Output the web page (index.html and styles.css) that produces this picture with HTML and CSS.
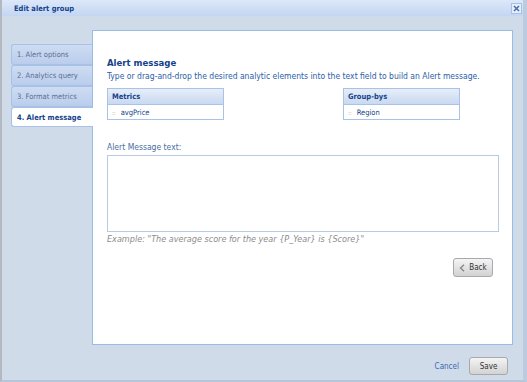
FILE: index.html
```html
<!DOCTYPE html>
<html>
<head>
<meta charset="utf-8">
<link rel="stylesheet" href="styles.css">
</head>
<body>
<div class="window">
  <div class="titlebar">
    <span class="title">Edit alert group</span>
    <span class="close">
      <svg width="9" height="9" viewBox="0 0 9 9"><path d="M2 2 L7 7 M7 2 L2 7" stroke="#4a6fb5" stroke-width="1.6"/></svg>
    </span>
  </div>
  <div class="body">
    <div class="main">
      <div class="tabs">
        <div class="tab">1. Alert options</div>
        <div class="tab">2. Analytics query</div>
        <div class="tab">3. Format metrics</div>
        <div class="tab active">4. Alert message</div>
      </div>
      <div class="panel">
        <h1 class="heading">Alert message</h1>
        <p class="desc">Type or drag-and-drop the desired analytic elements into the text field to build an Alert message.</p>
        <div class="lists">
          <div class="list">
            <div class="list-head">Metrics</div>
            <div class="list-row"><span class="grip">::</span>avgPrice</div>
          </div>
          <div class="list list-right">
            <div class="list-head">Group-bys</div>
            <div class="list-row"><span class="grip">::</span>Region</div>
          </div>
        </div>
        <div class="label">Alert Message text:</div>
        <div class="textarea"></div>
        <div class="example">Example: "The average score for the year {P_Year} is {Score}"</div>
        <div class="back-row">
          <span class="btn back"><svg width="6" height="8" viewBox="0 0 6 8"><path d="M5 0.8 L1.6 4 L5 7.2" fill="none" stroke="#8a8a8a" stroke-width="1.5"/></svg>Back</span>
        </div>
      </div>
    </div>
    <div class="footer">
      <span class="cancel">Cancel</span>
      <span class="btn save">Save</span>
    </div>
  </div>
</div>
</body>
</html>
```
FILE: styles.css
```css
html, body {
  margin: 0;
  padding: 0;
}
body {
  width: 527px;
  height: 382px;
  overflow: hidden;
  font-family: "DejaVu Sans Condensed", "DejaVu Sans", sans-serif;
  font-size: 8px;
  background: #cfdae8;
}
.window {
  width: 527px;
  height: 382px;
  box-sizing: border-box;
  display: flex;
  flex-direction: column;
  border-left: 2px solid #b4b9c0;
  border-right: 4px solid #bccbe0;
  border-bottom: 2px solid #b8c6da;
  background: #cfdbe9;
}
.titlebar {
  height: 16px;
  flex: none;
  display: flex;
  align-items: center;
  justify-content: space-between;
  background: linear-gradient(#dde8f9, #c3d6f2);
  padding: 0 1px 0 12px;
}
.title {
  font-weight: bold;
  color: #15428b;
  font-size: 7.5px;
}
.close {
  width: 9px;
  height: 9px;
  display: flex;
  background: #e6eefa;
  border: 1px solid #a9c0e4;
  margin-top: 1px;
}
.body {
  flex: 1;
  display: flex;
  flex-direction: column;
  padding-top: 14px;
}
.main {
  display: flex;
  padding-left: 9px;
}
.tabs {
  width: 81px;
  flex: none;
  padding-top: 14px;
  display: flex;
  flex-direction: column;
}
.tab {
  height: 21px;
  box-sizing: border-box;
  border: 1px solid #a8c1e6;
  border-right: none;
  border-radius: 3px 0 0 3px;
  background: linear-gradient(#cfdcf2, #b9cdec);
  color: #5a6f93;
  font-size: 7.5px;
  padding-left: 5px;
  display: flex;
  align-items: center;
}
.tab.active {
  height: 20px;
  background: #fff;
  color: #15428b;
  font-weight: bold;
  margin-right: -1px;
  position: relative;
  z-index: 1;
}
.panel {
  width: 421px;
  height: 315px;
  box-sizing: border-box;
  background: #fff;
  border: 1px solid #99bbe8;
  padding: 25px 14px 0 14px;
}
.heading {
  margin: 0;
  font-size: 9.5px;
  font-weight: bold;
  color: #15428b;
  line-height: 13px;
}
.desc {
  margin: 2px 0 0 0;
  font-size: 8.5px;
  color: #2c5ea8;
  line-height: 11px;
}
.lists {
  display: flex;
  margin-top: 6px;
}
.list {
  width: 117px;
  border: 1px solid #a9c3e6;
  box-sizing: border-box;
}
.list-right {
  margin-left: 119px;
}
.list-head {
  height: 16px;
  box-sizing: border-box;
  border-bottom: 1px solid #a9c3e6;
  background: linear-gradient(#e6eef9, #c9d9f0);
  color: #15428b;
  font-weight: bold;
  font-size: 7.5px;
  padding-left: 4px;
  display: flex;
  align-items: center;
}
.list-row {
  height: 14px;
  display: flex;
  align-items: center;
  color: #15428b;
  font-size: 7.5px;
  padding-left: 4px;
}
.grip {
  color: #a0a0a0;
  font-size: 6px;
  margin-right: 5px;
}
.label {
  margin-top: 22px;
  font-size: 8.5px;
  color: #4a6ea0;
  line-height: 11px;
}
.textarea {
  margin-top: 2px;
  width: 392px;
  height: 77px;
  box-sizing: border-box;
  border: 1px solid #b8cbe4;
}
.example {
  margin-top: 2px;
  font-size: 9px;
  color: #8c8c8c;
  font-style: italic;
  line-height: 11px;
}
.back-row {
  display: flex;
  justify-content: flex-end;
  margin-top: 13px;
  padding-right: 5px;
}
.btn {
  display: flex;
  align-items: center;
  justify-content: center;
  box-sizing: border-box;
  border: 1px solid #a9a9a9;
  border-radius: 3px;
  background: linear-gradient(#f4f4f4, #d2d2d2);
  color: #333;
  font-size: 8px;
}
.back {
  width: 40px;
  height: 19px;
  gap: 4px;
}
.footer {
  display: flex;
  justify-content: flex-end;
  align-items: center;
  padding-top: 12px;
  padding-right: 15px;
}
.cancel {
  color: #3a67b5;
  font-size: 8px;
  margin-right: 10px;
}
.save {
  width: 39px;
  height: 18px;
}
```
